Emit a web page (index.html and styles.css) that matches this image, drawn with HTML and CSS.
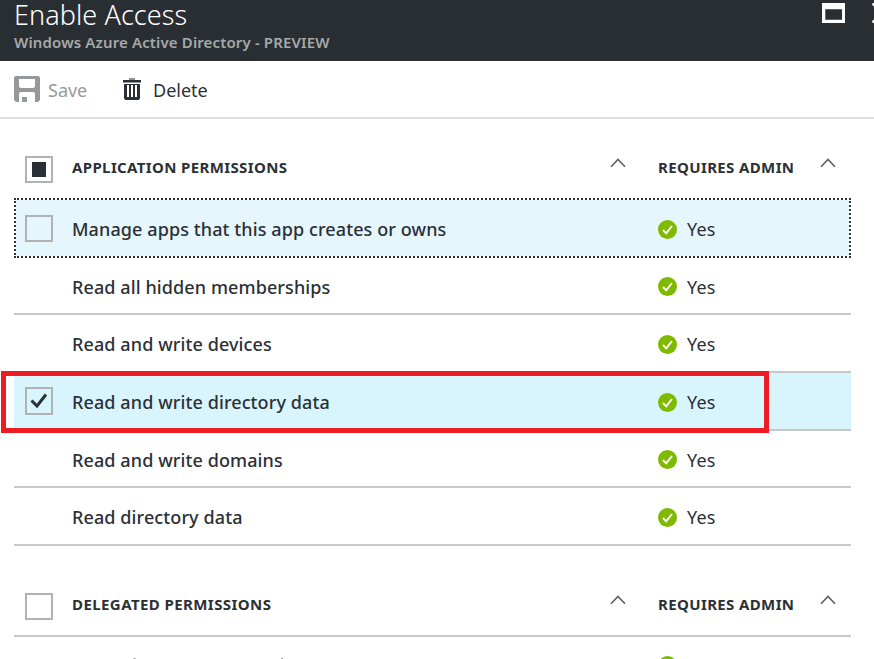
FILE: index.html
```
<!DOCTYPE html>
<html lang="en">
<head>
<meta charset="utf-8">
<title>Enable Access</title>
<link rel="stylesheet" href="styles.css">
</head>
<body>
<svg class="defs" aria-hidden="true">
  <symbol id="ok" viewBox="0 0 19 19"><circle cx="9.5" cy="9.5" r="9.5" fill="#7fba00"/><path d="M5 10l3.2 3.4L14 6" fill="none" stroke="#fff" stroke-width="1.9"/></symbol>
  <symbol id="caret" viewBox="0 0 16 10"><path d="M1 8.7L8 1.4l7 7.3" fill="none" stroke="#5c6066" stroke-width="1.6"/></symbol>
</svg>
<header class="blade-head">
  <div class="titles">
    <h1>Enable Access</h1>
    <p>Windows Azure Active Directory - PREVIEW</p>
  </div>
  <svg class="window-icons" width="52" height="61" viewBox="0 0 52 61"><path fill="#fff" fill-rule="evenodd" d="M0 3h23v20H0zM3.300 9.300v10.400h16.700v-10.400z"/><path d="M50.500 3.500L59 13M50.500 22.500L59 13" stroke="#fff" stroke-width="2.200"/></svg>
</header>
<nav class="toolbar">
  <button class="save"><svg width="26" height="26" viewBox="0 0 26 26"><path fill="#96999b" fill-rule="evenodd" d="M2 0h22a2 2 0 0 1 2 2v22l-2 2h-3V18q0-2-2-2H7q-2 0-2 2v8H2L0 24V2a2 2 0 0 1 2-2zM5 3v7q0 2 2 2h12q2 0 2-2V3zM8 21h5v5H8z"/></svg><span>Save</span></button>
  <button class="delete"><svg width="18" height="22" viewBox="0 0 18 22"><path fill="#8d9195" d="M6 0h6v2H6z"/><path fill="#2b3036" fill-rule="evenodd" d="M0 2h18v2.500H0zM1 6h16v14q0 2-2 2H3q-2 0-2-2zM4 7v12h2V7zM8 7v12h2V7zM12 7v12h2V7z"/></svg><span>Delete</span></button>
</nav>
<main class="grid">
  <div class="row head first"><i class="box"><b class="partial"></b></i><span class="name">APPLICATION PERMISSIONS</span><svg class="caret"><use href="#caret"/></svg><span class="admin">REQUIRES ADMIN</span><svg class="caret"><use href="#caret"/></svg></div>
  <div class="row focused"><i class="box"></i><span class="name">Manage apps that this app creates or owns</span><span class="admin"><svg class="ok"><use href="#ok"/></svg>Yes</span></div>
  <div class="row short"><span class="name">Read all hidden memberships</span><span class="admin"><svg class="ok"><use href="#ok"/></svg>Yes</span></div>
  <div class="row"><span class="name">Read and write devices</span><span class="admin"><svg class="ok"><use href="#ok"/></svg>Yes</span></div>
  <div class="row selected"><i class="box"><svg width="18" height="16" viewBox="0 0 18 16"><path d="M1.500 7.500L7 13L16 1.500" fill="none" stroke="#2b3036" stroke-width="3"/></svg></i><span class="name">Read and write directory data</span><span class="admin"><svg class="ok"><use href="#ok"/></svg>Yes</span><div class="highlight"></div></div>
  <div class="row short"><span class="name">Read and write domains</span><span class="admin"><svg class="ok"><use href="#ok"/></svg>Yes</span></div>
  <div class="row"><span class="name">Read directory data</span><span class="admin"><svg class="ok"><use href="#ok"/></svg>Yes</span></div>
  <div class="row head second"><i class="box"></i><span class="name">DELEGATED PERMISSIONS</span><svg class="caret"><use href="#caret"/></svg><span class="admin">REQUIRES ADMIN</span><svg class="caret"><use href="#caret"/></svg></div>
  <div class="row next"><svg class="name peek" width="220" height="22" viewBox="0 0 220 22"><path d="M61.500 0h2v1h-2zM209 0h2v1h-2z" fill="#999ca0"/></svg><span class="admin"><svg class="ok"><use href="#ok"/></svg></span></div>
</main>
</body>
</html>
```
FILE: styles.css
```
* { box-sizing: border-box; }
body { margin: 0; height: 659px; display: flex; flex-direction: column; overflow: hidden; background: #fff; color: #2b3036; font-family: "Noto Sans", "Open Sans", sans-serif; }
.defs { position: absolute; width: 0; height: 0; }
svg { display: block; flex: none; }
.blade-head { flex: none; height: 61px; background: #292e32; display: flex; justify-content: space-between; padding-left: 14px; }
.titles { white-space: nowrap; }
h1 { margin: 0; height: 30px; line-height: 29px; font-size: 27px; font-weight: 300; letter-spacing: 0.08px; color: #fff; }
p { margin: 0; line-height: 24px; font-size: 15px; font-weight: 600; letter-spacing: 0.14px; color: #a6a9aa; }
.toolbar { flex: none; height: 58px; border-bottom: 2px solid #dedede; display: flex; align-items: center; padding-left: 14px; }
button { display: flex; align-items: center; padding: 0; border: 0; background: none; color: inherit; font: 400 18px/28px "Noto Sans", sans-serif; white-space: nowrap; }
button span { margin-top: 2px; }
.save { width: 109px; gap: 8px; color: #96999b; }
.delete { gap: 12px; }
.grid { flex: 1; min-height: 0; overflow: clip; width: 874px; padding: 0 23px 0 14px; }
.row { position: relative; display: grid; grid-template-columns: 58px 538px 48px 162px 31px; align-items: center; height: 58px; border-bottom: 2px solid #c8c8c8; font-size: 18px; font-weight: 500; letter-spacing: 0.1px; white-space: nowrap; }
.short { height: 57px; }
.name { grid-column: 2; grid-row: 1; margin-top: 2px; }
.admin { grid-column: 4; grid-row: 1; margin-top: 2px; display: flex; align-items: center; gap: 10px; font-weight: 400; }
.head { font-size: 15px; font-weight: 700; letter-spacing: 0.37px; }
.head .name, .head .admin { margin: 0 0 4px; }
.head .admin { font-weight: 700; }
.first { height: 79px; border: 0; padding-top: 20px; }
.second { height: 91px; padding-top: 28px; letter-spacing: 0.42px; }
.second .name, .second .admin { margin-bottom: 2px; }
.second .admin { letter-spacing: 0.37px; }
.caret { width: 16px; height: 10px; margin-bottom: 9px; }
.first .caret { margin-bottom: 11px; }
.box { grid-column: 1; grid-row: 1; width: 28px; height: 27px; margin-left: 11px; border: 2px solid #b2b2b2; display: flex; align-items: center; justify-content: center; }
.first .box { margin-top: 2px; }
.second .box { margin-top: 4px; }
.partial { width: 14px; height: 15px; background: #2b3036; }
.focused { height: 60px; border: 2px dotted #333; background: #e5f6fd; background-clip: padding-box; grid-template-columns: 56px 538px 48px 162px 29px; }
.focused .box { margin-left: 9px; }
.selected { background: #d8f5fe; }
.selected .box { height: 28px; }
.highlight { position: absolute; left: -13px; top: -2px; width: 768px; height: 62px; border: 5px solid #ed1c24; z-index: 1; }
.ok { width: 19px; height: 19px; }
.next { height: 56px; border: 0; grid-template-rows: 56px; }
.next .admin { margin-top: 1px; }
.peek { margin-top: 8px; }
```
